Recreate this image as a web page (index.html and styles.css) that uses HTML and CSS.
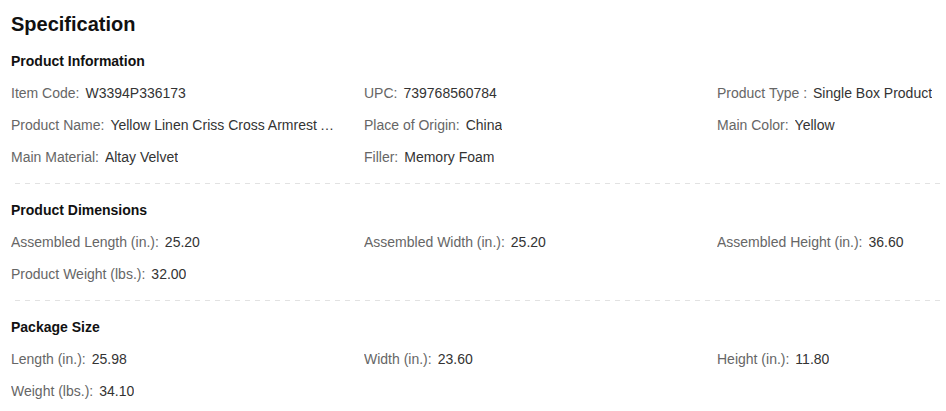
FILE: index.html
```html
<!DOCTYPE html>
<html>
<head>
<meta charset="utf-8">
<link rel="stylesheet" href="styles.css">
</head>
<body>
<div class="spec">
  <h1 class="title">Specification</h1>

  <section class="group">
    <h2 class="group-title">Product Information</h2>
    <div class="grid">
      <div class="item"><span class="label">Item Code:</span><span class="value">W3394P336173</span></div>
      <div class="item"><span class="label">UPC:</span><span class="value">739768560784</span></div>
      <div class="item"><span class="label">Product Type :</span><span class="value">Single Box Product</span></div>
      <div class="item"><span class="label">Product Name:</span><span class="value">Yellow Linen Criss Cross Armrest Accent Chair with Metal Legs</span></div>
      <div class="item"><span class="label">Place of Origin:</span><span class="value">China</span></div>
      <div class="item"><span class="label">Main Color:</span><span class="value">Yellow</span></div>
      <div class="item"><span class="label">Main Material:</span><span class="value">Altay Velvet</span></div>
      <div class="item"><span class="label">Filler:</span><span class="value">Memory Foam</span></div>
    </div>
  </section>
  <div class="divider"></div>

  <section class="group">
    <h2 class="group-title">Product Dimensions</h2>
    <div class="grid">
      <div class="item"><span class="label">Assembled Length (in.):</span><span class="value">25.20</span></div>
      <div class="item"><span class="label">Assembled Width (in.):</span><span class="value">25.20</span></div>
      <div class="item"><span class="label">Assembled Height (in.):</span><span class="value">36.60</span></div>
      <div class="item"><span class="label">Product Weight (lbs.):</span><span class="value">32.00</span></div>
    </div>
  </section>
  <div class="divider"></div>

  <section class="group">
    <h2 class="group-title">Package Size</h2>
    <div class="grid">
      <div class="item"><span class="label">Length (in.):</span><span class="value">25.98</span></div>
      <div class="item"><span class="label">Width (in.):</span><span class="value">23.60</span></div>
      <div class="item"><span class="label">Height (in.):</span><span class="value">11.80</span></div>
      <div class="item"><span class="label">Weight (lbs.):</span><span class="value">34.10</span></div>
    </div>
  </section>
</div>
</body>
</html>
```

FILE: styles.css
```css
html, body {
  margin: 0;
  padding: 0;
  background: #fff;
}
body {
  font-family: "Liberation Sans", Arial, sans-serif;
}
.spec {
  padding: 11px 5px 0 11px;
}
.title {
  margin: 0;
  font-size: 20px;
  line-height: 26px;
  font-weight: bold;
  color: #111;
}
.group {
  padding-top: 14px;
}
.divider + .group {
  padding-top: 16px;
}
.group-title {
  margin: 0 0 6px 0;
  font-size: 14px;
  line-height: 20px;
  font-weight: bold;
  color: #111;
}
.grid {
  display: grid;
  grid-template-columns: 325px 325px minmax(0, 1fr);
  column-gap: 28px;
}
.item {
  display: flex;
  align-items: center;
  height: 32px;
  font-size: 14px;
  white-space: nowrap;
  overflow: hidden;
  min-width: 0;
}
.label {
  color: #666;
  flex: none;
  margin-right: 6px;
}
.value {
  color: #333;
  overflow: hidden;
  text-overflow: ellipsis;
  min-width: 0;
}
.divider {
  margin: 10px 0 0 4px;
  height: 1px;
  background: repeating-linear-gradient(to right, #e2e2e2 0 5px, transparent 5px 10px);
}
```
